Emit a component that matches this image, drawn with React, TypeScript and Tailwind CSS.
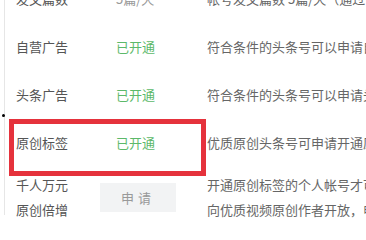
const rows = [
  { name: "发文篇数", status: "5篇/天", desc: "帐号发文篇数 5篇/天（通过审核后可提升）", statusGray: true },
  { name: "自营广告", status: "已开通", desc: "符合条件的头条号可以申请自营广告" },
  { name: "头条广告", status: "已开通", desc: "符合条件的头条号可以申请头条广告" },
  { name: "原创标签", status: "已开通", desc: "优质原创头条号可申请开通原创标签" },
];

export default function App() {
  return (
    <div
      className="relative w-[366px] h-[240px] overflow-hidden bg-white text-[13px]"
      style={{ fontFamily: '"Noto Sans CJK SC", "Noto Sans", sans-serif' }}
    >
      <div className="ml-[4px] h-full border-l border-[#e6e6e6] pl-[11px] mt-[-25px]">
        {rows.map((r) => (
          <div key={r.name} className="flex h-[48px] items-center whitespace-nowrap">
            <div className="w-[84px] shrink-0 text-[#555]">{r.name}</div>
            <div className={`w-[107px] shrink-0 pl-[16px] ${r.statusGray ? "text-[#999]" : "text-[#5cb96a]"}`}>
              {r.status}
            </div>
            <div className="text-[#666]">{r.desc}</div>
          </div>
        ))}
        <div className="flex items-center pt-[5px] whitespace-nowrap leading-[25px]">
          <div className="w-[84px] shrink-0 text-[#555]">
            <div>千人万元</div>
            <div>原创倍增</div>
          </div>
          <div className="w-[107px] shrink-0">
            <div className="flex h-[29px] w-[76px] items-center justify-center bg-[#f2f3f4] text-[#999] tracking-[4px]">
              申请
            </div>
          </div>
          <div className="text-[#666]">
            <div>开通原创标签的个人帐号才可以申请</div>
            <div>向优质视频原创作者开放，申请通过后</div>
          </div>
        </div>
      </div>

      {/* annotation */}
      <div className="absolute left-[9px] top-[119px] h-[57px] w-[197px] border-[5px] border-[#e5323c]" />
      <div className="absolute left-[2px] top-[114px] h-[3px] w-[3px] rounded-full bg-black" />
    </div>
  );
}
